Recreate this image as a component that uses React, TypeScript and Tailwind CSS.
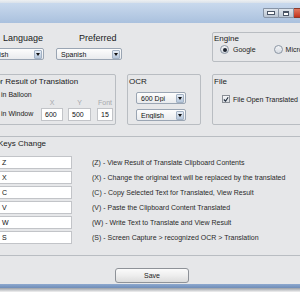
import React from "react";

function Select({ text, w }: { text: string; w: string }) {
  return (
    <div className={`flex items-center h-[12px] ${w} border border-[#9aa5b3] rounded-[2px] bg-gradient-to-b from-[#fdfdfd] to-[#e9ebee]`}>
      <span className="flex-1 pl-[4px] text-[7px] leading-none text-[#111] whitespace-nowrap overflow-hidden">{text}</span>
      <div className="w-[8px] h-[9px] mr-[1px] rounded-[1px] bg-gradient-to-b from-[#e6edf6] to-[#b4c5da] border border-[#a3b2c4] flex items-center justify-center">
        <div className="w-0 h-0 border-l-[2px] border-r-[2px] border-t-[3px] border-l-transparent border-r-transparent border-t-[#111]" />
      </div>
    </div>
  );
}

function Radio({ on }: { on?: boolean }) {
  return (
    <div className="w-[9px] h-[9px] rounded-full border border-[#8b96a4] bg-gradient-to-b from-[#f4f5f7] to-[#d6dbe2] flex items-center justify-center shrink-0">
      {on && <div className="w-[4px] h-[4px] rounded-full bg-[#1e2530]" />}
    </div>
  );
}

function Field({ text, w }: { text: string; w: string }) {
  return (
    <div className={`h-[13px] ${w} bg-white border border-[#c2c4c8] flex items-center pl-[3px] text-[7px] leading-none text-[#111]`}>
      {text}
    </div>
  );
}

const keys: [string, string][] = [
  ["Z", "(Z) - View Result of Translate Clipboard Contents"],
  ["X", "(X) - Change the original text will be replaced by the translated"],
  ["C", "(C) - Copy Selected Text for Translated, View Result"],
  ["V", "(V) - Paste the Clipboard Content Translated"],
  ["W", "(W) - Write Text to Translate and View Result"],
  ["S", "(S) - Screen Capture > recognized OCR > Translation"],
];

export default function App() {
  return (
    <div className="w-[300px] h-[300px] overflow-hidden bg-white font-['Liberation_Sans',Arial,sans-serif] text-[#1a1a1a]">
      <div className="h-[3px] bg-gradient-to-b from-[#eef0f2] to-[#d9e1ea]" />
      <div className="h-[20px] bg-gradient-to-b from-[#c9d9ed] to-[#aac1de] flex justify-end items-start pt-[5px]">
        <div className="flex h-[10px]">
          <div className="w-[16px] h-[10px] border border-[#8794a6] rounded-bl-[2px] bg-gradient-to-b from-[#dfe5ec] to-[#b9c4d2] flex items-center justify-center">
            <div className="w-[6px] h-[2px] bg-white border border-[#4a5566] box-content" />
          </div>
          <div className="w-[15px] h-[10px] border-y border-r border-[#8794a6] bg-gradient-to-b from-[#dfe5ec] to-[#b9c4d2] flex items-center justify-center">
            <div className="w-[6px] h-[5px] border border-[#4a5566] border-t-2 bg-white" />
          </div>
          <div className="w-[6px] h-[10px] bg-gradient-to-b from-[#e0775f] to-[#c3301a] border-y border-[#8a3a2a]" />
        </div>
      </div>

      <div className="h-[261px] bg-[#e6e7e9] flex flex-col overflow-hidden">
        {/* Row 1 */}
        <div className="mt-[9px] h-[30px] flex shrink-0">
          <div className="-ml-[22px] w-[66px] shrink-0 flex flex-col">
            <div className="pl-[25px] text-[9px] leading-[10px] mt-[1px] whitespace-nowrap">Language</div>
            <div className="mt-[5px]"><Select text="Spanish" w="w-[66px]" /></div>
          </div>
          <div className="ml-[12px] w-[66px] shrink-0 flex flex-col">
            <div className="pl-[23px] text-[9px] leading-[10px] mt-[1px] whitespace-nowrap">Preferred</div>
            <div className="mt-[5px]"><Select text="Spanish" w="w-[66px]" /></div>
          </div>
          <div className="ml-[90px] w-[110px] h-[30px] shrink-0 border border-[#b9bdc2] rounded-[2px] flex flex-col">
            <div className="pl-[1px] pt-[1px] text-[8px] leading-[9px]">Engine</div>
            <div className="flex items-center mt-[2px] pl-[7px] text-[7px] leading-none">
              <Radio on />
              <span className="ml-[4px]">Google</span>
              <div className="ml-[18px]"><Radio /></div>
              <span className="ml-[3px] whitespace-nowrap">Microsoft</span>
            </div>
          </div>
        </div>

        {/* Row 2 */}
        <div className="mt-[12px] h-[51px] flex shrink-0">
          <div className="-ml-[12px] w-[128px] shrink-0 border border-[#b9bdc2] rounded-[2px] flex flex-col">
            <div className="pl-[2px] pt-[2px] text-[8px] leading-[10px] whitespace-nowrap">For Result of Translation</div>
            <div className="flex items-end">
              <div className="pl-[12px] w-[52px] flex flex-col text-[7px] leading-[10px]">
                <div className="mt-[3px] whitespace-nowrap">in Balloon</div>
                <div className="mt-[9px] mb-[2px] whitespace-nowrap">in Window</div>
              </div>
              <div className="w-[22px] flex flex-col items-center">
                <div className="text-[7px] leading-[10px] text-[#a7a9ad]">X</div>
                <Field text="600" w="w-[22px]" />
              </div>
              <div className="ml-[5px] w-[23px] flex flex-col items-center">
                <div className="text-[7px] leading-[10px] text-[#a7a9ad]">Y</div>
                <Field text="500" w="w-[23px]" />
              </div>
              <div className="ml-[6px] w-[16px] flex flex-col items-center">
                <div className="text-[7px] leading-[10px] text-[#a7a9ad]">Font</div>
                <Field text="15" w="w-[16px]" />
              </div>
            </div>
          </div>
          <div className="ml-[11px] w-[74px] shrink-0 border border-[#b9bdc2] rounded-[2px] flex flex-col">
            <div className="pl-[1px] pt-[2px] text-[8px] leading-[10px]">OCR</div>
            <div className="ml-[8px] mt-[5px]"><Select text="600 Dpi" w="w-[50px]" /></div>
            <div className="ml-[8px] mt-[5px]"><Select text="English" w="w-[50px]" /></div>
          </div>
          <div className="ml-[11px] w-[110px] shrink-0 border border-[#b9bdc2] rounded-[2px] flex flex-col">
            <div className="pl-[1px] pt-[2px] text-[8px] leading-[10px]">File</div>
            <div className="flex items-center ml-[9px] mt-[8px] text-[7px] leading-none">
              <div className="w-[8px] h-[8px] border border-[#8a8f96] bg-gradient-to-b from-[#f6f7f8] to-[#d9dde2] flex items-center justify-center shrink-0">
                <svg width="7" height="7" viewBox="0 0 7 7">
                  <path d="M1 3.5 L3 5.5 L6 0.8" stroke="#1f2b3c" strokeWidth="1.3" fill="none" />
                </svg>
              </div>
              <span className="ml-[3px] whitespace-nowrap">File Open Translated</span>
            </div>
          </div>
        </div>

        {/* Keys */}
        <div className="mt-[11px] -ml-[5px] w-[320px] h-[120px] shrink-0 border border-[#b9bdc2] rounded-[2px] flex flex-col">
          <div className="pl-[2px] pt-[2px] text-[8px] leading-[10px] whitespace-nowrap">Keys Change</div>
          <div className="mt-[7px] flex flex-col gap-[2px]">
            {keys.map(([k, d]) => (
              <div key={k} className="flex items-center">
                <Field text={k} w="w-[76px] pl-[5px]" />
                <span className="ml-[20px] text-[7px] leading-none text-[#2a2a2a] whitespace-nowrap">{d}</span>
              </div>
            ))}
          </div>
        </div>

        <div className="mt-[12px] ml-[115px] w-[74px] h-[15px] shrink-0 border border-[#8e9298] rounded-[3px] bg-gradient-to-b from-[#fbfbfb] via-[#eeeeee] to-[#dcdcdc] flex items-center justify-center text-[7px] leading-none">
          Save
        </div>
      </div>
      <div className="h-[4px] bg-gradient-to-b from-[#8ea9cf] to-[#6f8db8]" />
      <div className="h-[4px] bg-gradient-to-b from-[#9a9fa6] to-[#f2f2f2]" />
    </div>
  );
}
